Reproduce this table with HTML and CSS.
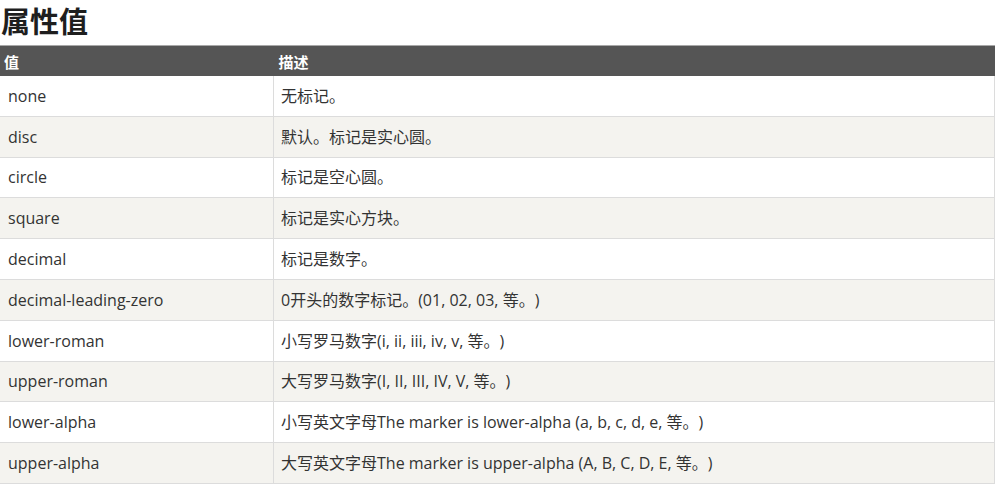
FILE: index.html
```html
<!DOCTYPE html>
<html lang="zh-CN">
<head>
<meta charset="utf-8">
<title>属性值</title>
<link rel="stylesheet" href="styles.css">
</head>
<body>
<h1 class="title">属性值</h1>
<table class="ref">
  <thead>
    <tr><th class="c1">值</th><th>描述</th></tr>
  </thead>
  <tbody>
    <tr><td class="c1">none</td><td>无标记。</td></tr>
    <tr><td class="c1">disc</td><td>默认。标记是实心圆。</td></tr>
    <tr><td class="c1">circle</td><td>标记是空心圆。</td></tr>
    <tr><td class="c1">square</td><td>标记是实心方块。</td></tr>
    <tr><td class="c1">decimal</td><td>标记是数字。</td></tr>
    <tr><td class="c1">decimal-leading-zero</td><td>0开头的数字标记。(01, 02, 03, 等。)</td></tr>
    <tr><td class="c1">lower-roman</td><td>小写罗马数字(i, ii, iii, iv, v, 等。)</td></tr>
    <tr><td class="c1">upper-roman</td><td>大写罗马数字(I, II, III, IV, V, 等。)</td></tr>
    <tr><td class="c1">lower-alpha</td><td>小写英文字母The marker is lower-alpha (a, b, c, d, e, 等。)</td></tr>
    <tr><td class="c1">upper-alpha</td><td>大写英文字母The marker is upper-alpha (A, B, C, D, E, 等。)</td></tr>
  </tbody>
</table>
</body>
</html>
```

FILE: styles.css
```css
html, body {
  margin: 0;
  padding: 0;
  background: #ffffff;
}
body {
  font-family: "Open Sans", "Noto Sans CJK SC", sans-serif;
  color: #333333;
  text-spacing-trim: space-all;
}
.title {
  margin: 0;
  padding-left: 1px;
  font-family: "Noto Sans CJK SC", sans-serif;
  font-size: 29px;
  line-height: 40px;
  font-weight: 700;
  color: #1e1e1e;
}
.ref {
  margin-top: 5px;
  width: 995px;
  border-collapse: collapse;
  font-size: 16px;
}
.ref th {
  background: #555555;
  color: #ffffff;
  font-family: "Noto Sans CJK SC", sans-serif;
  font-weight: 700;
  font-size: 15px;
  text-align: left;
  height: 30px;
  padding: 0 5px;
  border-top: 1px solid #a8a8a8;
  line-height: 1;
}
.ref th.c1 {
  padding-left: 4px;
}
.ref td {
  height: 39.8px;
  padding: 0 7px;
  border-bottom: 1px solid #dcdcdc;
  border-right: 1px solid #dcdcdc;
  line-height: 1;
  vertical-align: middle;
}
.ref td.c1 {
  width: 258px;
  padding-left: 8px;
}
.ref tbody tr:nth-child(even) td {
  background: #f4f3ef;
}
```
